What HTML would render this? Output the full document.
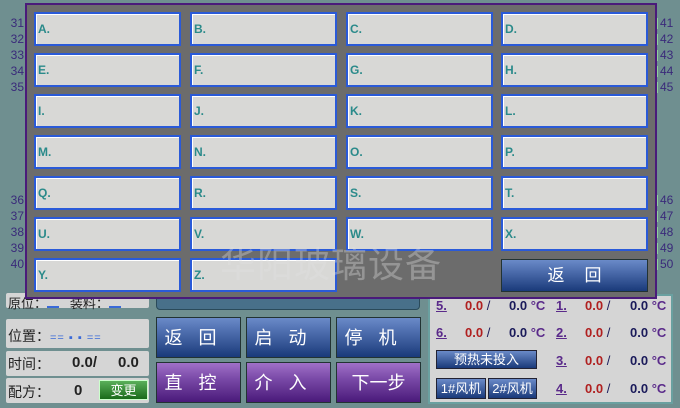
<!DOCTYPE html><html><head><meta charset="utf-8"><style>
*{margin:0;padding:0;box-sizing:border-box}
body{width:680px;height:408px;overflow:hidden;background:#6f8f90;position:relative;font-family:"Liberation Sans","Noto Sans CJK SC",sans-serif}
.a{position:absolute}
.n{position:absolute;font-size:12px;color:#3a2a7a;line-height:13px}
.nl{left:7px;width:17px;text-align:right}
.nl::after,.nr::before{content:"";position:absolute;top:1px;width:2px;height:11px;background:#e8f0e8}
.nl::after{right:-3px}
.nr{left:660px}.nr::before{left:-4px;background:#8fd09a}
.ov{left:25px;top:3px;width:632px;height:296px;background:#6c6c6c;border:2px solid #4a1a7a}
.f{position:absolute;width:147px;height:34px;background:#d8d8d6;border:2px solid #2a5ad8;color:#2a8a8a;font-size:12px;font-weight:bold;padding:8px 0 0 2px;box-shadow:inset 1px 1px 0 #fff}
.pl{position:absolute;left:6px;width:143px;background:#d5d5d5;border-radius:2px;font-size:14px;color:#222}
.bt{position:absolute;width:85px;height:41px;color:#fff;font-size:18px;text-align:center;line-height:41px;letter-spacing:16px;border:1px solid #233}
.bb{background:linear-gradient(#6a8ac8,#4a6aaa 40%,#1a3a7a)}
.bp{background:linear-gradient(#a070c8,#7a4aa8 40%,#4a1a7a)}
.rp{left:428px;top:294px;width:245px;height:110px;background:#d5d5d5;border:2px solid #6aa0a0}
.r{position:absolute;font-size:13px;font-weight:bold}
.k{color:#5a2a8a;text-decoration:underline}
.red{color:#b02020}.dk{color:#1a1a5a}.pu{color:#5a2a8a}
.sb{position:absolute;background:linear-gradient(#6a8ac8,#1a3a7a);color:#fff;font-size:13px;text-align:center;border:1px solid #223}
</style></head><body>
<div class="n nl" style="top:17px">31</div><div class="n nl" style="top:33px">32</div><div class="n nl" style="top:49px">33</div><div class="n nl" style="top:65px">34</div><div class="n nl" style="top:81px">35</div>
<div class="n nl" style="top:194px">36</div><div class="n nl" style="top:210px">37</div><div class="n nl" style="top:226px">38</div><div class="n nl" style="top:242px">39</div><div class="n nl" style="top:258px">40</div>
<div class="n nr" style="top:17px">41</div><div class="n nr" style="top:33px">42</div><div class="n nr" style="top:49px">43</div><div class="n nr" style="top:65px">44</div><div class="n nr" style="top:81px">45</div>
<div class="n nr" style="top:194px">46</div><div class="n nr" style="top:210px">47</div><div class="n nr" style="top:226px">48</div><div class="n nr" style="top:242px">49</div><div class="n nr" style="top:258px">50</div>

<div class="pl" style="top:293px;height:15px;font-size:13px;padding-left:2px;line-height:22px">原位：<span style="display:inline-block;width:12px;border-bottom:2px solid #3a6ad8"></span>&nbsp;&nbsp;&nbsp;装料：<span style="display:inline-block;width:12px;border-bottom:2px solid #3a6ad8"></span></div>
<div class="pl" style="top:319px;height:29px;padding:7px 0 0 2px">位置：<span style="color:#3a6ad8;font-size:11px;letter-spacing:1px">== ▪ ▪ ==</span></div>
<div class="pl" style="top:351px;height:25px;padding:3px 0 0 2px">时间：<b style="position:absolute;left:66px;font-size:15px">0.0/</b><b style="position:absolute;left:112px;font-size:15px">0.0</b></div>
<div class="pl" style="top:378px;height:25px;padding:4px 0 0 2px">配方：<b style="position:absolute;left:68px;font-size:15px">0</b><span style="position:absolute;left:93px;top:2px;width:49px;height:20px;background:linear-gradient(#5ab05a,#1a6a1a);color:#fff;text-align:center;font-size:13px;line-height:20px;border:1px solid #cfc">变更</span></div>

<div class="a" style="left:156px;top:290px;width:264px;height:20px;background:#48708a;border-radius:0 0 4px 4px;border:1px solid #2a4a5a"></div>
<div class="bt bb" style="left:156px;top:317px">返回</div>
<div class="bt bb" style="left:246px;top:317px">启动</div>
<div class="bt bb" style="left:336px;top:317px">停机</div>
<div class="bt bp" style="left:156px;top:362px">直控</div>
<div class="bt bp" style="left:246px;top:362px">介入</div>
<div class="bt bp" style="left:336px;top:362px;letter-spacing:0">下一步</div>

<div class="a rp"></div>
<div class="r k" style="left:436px;top:298px">5.</div><div class="r red" style="left:465px;top:298px">0.0 <span class="dk" style="font-weight:normal">/</span></div><div class="r dk" style="left:509px;top:298px">0.0 <span class="pu">°C</span></div>
<div class="r k" style="left:556px;top:298px">1.</div><div class="r red" style="left:585px;top:298px">0.0 <span class="dk" style="font-weight:normal">/</span></div><div class="r dk" style="left:630px;top:298px">0.0 <span class="pu">°C</span></div>
<div class="r k" style="left:436px;top:325px">6.</div><div class="r red" style="left:465px;top:325px">0.0 <span class="dk" style="font-weight:normal">/</span></div><div class="r dk" style="left:509px;top:325px">0.0 <span class="pu">°C</span></div>
<div class="r k" style="left:556px;top:325px">2.</div><div class="r red" style="left:585px;top:325px">0.0 <span class="dk" style="font-weight:normal">/</span></div><div class="r dk" style="left:630px;top:325px">0.0 <span class="pu">°C</span></div>
<div class="sb" style="left:436px;top:350px;width:101px;height:19px;line-height:17px">预热未投入</div>
<div class="r k" style="left:556px;top:353px">3.</div><div class="r red" style="left:585px;top:353px">0.0 <span class="dk" style="font-weight:normal">/</span></div><div class="r dk" style="left:630px;top:353px">0.0 <span class="pu">°C</span></div>
<div class="sb" style="left:436px;top:378px;width:50px;height:21px;line-height:19px">1#风机</div>
<div class="sb" style="left:488px;top:378px;width:49px;height:21px;line-height:19px">2#风机</div>
<div class="r k" style="left:556px;top:381px">4.</div><div class="r red" style="left:585px;top:381px">0.0 <span class="dk" style="font-weight:normal">/</span></div><div class="r dk" style="left:630px;top:381px">0.0 <span class="pu">°C</span></div>

<div class="a ov"></div>
<div class="f" style="left:34px;top:12px">A.</div><div class="f" style="left:190px;top:12px">B.</div><div class="f" style="left:346px;top:12px">C.</div><div class="f" style="left:501px;top:12px">D.</div>
<div class="f" style="left:34px;top:53px">E.</div><div class="f" style="left:190px;top:53px">F.</div><div class="f" style="left:346px;top:53px">G.</div><div class="f" style="left:501px;top:53px">H.</div>
<div class="f" style="left:34px;top:94px">I.</div><div class="f" style="left:190px;top:94px">J.</div><div class="f" style="left:346px;top:94px">K.</div><div class="f" style="left:501px;top:94px">L.</div>
<div class="f" style="left:34px;top:135px">M.</div><div class="f" style="left:190px;top:135px">N.</div><div class="f" style="left:346px;top:135px">O.</div><div class="f" style="left:501px;top:135px">P.</div>
<div class="f" style="left:34px;top:176px">Q.</div><div class="f" style="left:190px;top:176px">R.</div><div class="f" style="left:346px;top:176px">S.</div><div class="f" style="left:501px;top:176px">T.</div>
<div class="f" style="left:34px;top:217px">U.</div><div class="f" style="left:190px;top:217px">V.</div><div class="f" style="left:346px;top:217px">W.</div><div class="f" style="left:501px;top:217px">X.</div>
<div class="f" style="left:34px;top:258px">Y.</div><div class="f" style="left:190px;top:258px">Z.</div>
<div class="bt bb" style="left:501px;top:259px;width:147px;height:33px;line-height:31px;font-size:17px;letter-spacing:20px;padding-left:20px">返回</div>
<div class="a" style="left:220px;top:236px;font-size:36px;color:rgba(225,225,225,.35);letter-spacing:1px">华阳玻璃设备</div>
</body></html>
